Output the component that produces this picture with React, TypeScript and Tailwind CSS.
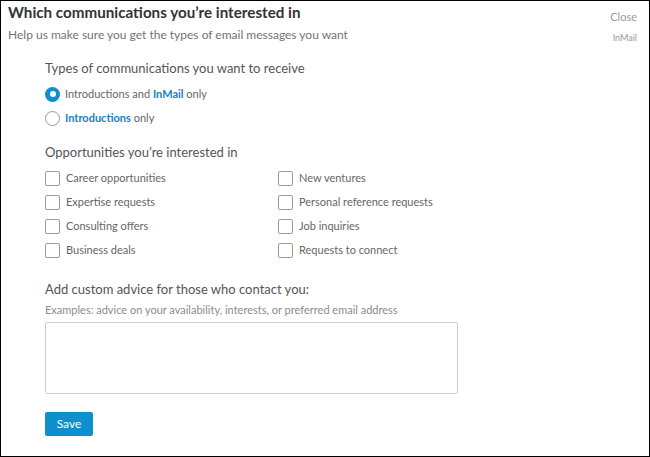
export default function App() {
  const left = ["Career opportunities", "Expertise requests", "Consulting offers", "Business deals"];
  const right = ["New ventures", "Personal reference requests", "Job inquiries", "Requests to connect"];

  const Box = ({ label }: { label: string }) => (
    <label className="flex items-center h-6 gap-[6px]">
      <span className="w-[15px] h-[15px] border border-[#9a9a9a] rounded-[2px] bg-white shrink-0" />
      <span className="text-[11px] text-[#666]">{label}</span>
    </label>
  );

  return (
    <div
      className="w-[650px] h-[457px] bg-white border border-black relative overflow-hidden"
      style={{ fontFamily: "Lato, 'Open Sans', sans-serif" }}
    >
      <div className="absolute right-[12px] top-[9px] flex flex-col items-end text-[#999]">
        <span className="text-[11px] leading-[14px]">Close</span>
        <span className="text-[9px] leading-[12px] mt-[8px]">InMail</span>
      </div>

      <div className="pl-[7px] pt-[1px]">
        <h1 className="text-[15.2px] leading-[20px] font-bold text-[#333]">Which communications you’re interested in</h1>
        <p className="text-[12px] leading-[15px] mt-[5px] text-[#737373]">
          Help us make sure you get the types of email messages you want
        </p>
      </div>

      <div className="pl-[44px] pt-[18px]">
        <h2 className="text-[13px] leading-[16px] text-[#555]">Types of communications you want to receive</h2>

        <div className="mt-[6px] flex flex-col">
          <label className="flex items-center h-6 gap-[5px]">
            <span className="w-[15px] h-[15px] rounded-full bg-[#0e8fce] flex items-center justify-center shrink-0">
              <span className="w-[6px] h-[6px] rounded-full bg-white" />
            </span>
            <span className="text-[11px] text-[#666]">
              Introductions and <b className="text-[#1b80c2]">InMail</b> only
            </span>
          </label>
          <label className="flex items-center h-6 gap-[5px]">
            <span className="w-[15px] h-[15px] rounded-full border border-[#9a9a9a] bg-white shrink-0" />
            <span className="text-[11px] text-[#666]">
              <b className="text-[#1b80c2]">Introductions</b> only
            </span>
          </label>
        </div>

        <h2 className="text-[13px] leading-[16px] text-[#555] mt-[14px]">Opportunities you’re interested in</h2>

        <div className="mt-[6px] flex">
          <div className="w-[233px] flex flex-col">
            {left.map((l) => (
              <Box key={l} label={l} />
            ))}
          </div>
          <div className="flex flex-col">
            {right.map((l) => (
              <Box key={l} label={l} />
            ))}
          </div>
        </div>

        <h2 className="text-[13px] leading-[16px] text-[#555] mt-[19px]">Add custom advice for those who contact you:</h2>
        <p className="text-[11px] leading-[13px] text-[#8c8c8c] mt-[6px]">
          Examples: advice on your availability, interests, or preferred email address
        </p>
        <textarea className="block mt-[6px] w-[413px] h-[72px] border border-[#ccc] rounded-[2px] resize-none outline-none" />

        <button className="mt-[18px] w-[48px] h-[24px] bg-[#0e8fce] text-white text-[12px] rounded-[2px] flex items-center justify-center">
          Save
        </button>
      </div>
    </div>
  );
}
